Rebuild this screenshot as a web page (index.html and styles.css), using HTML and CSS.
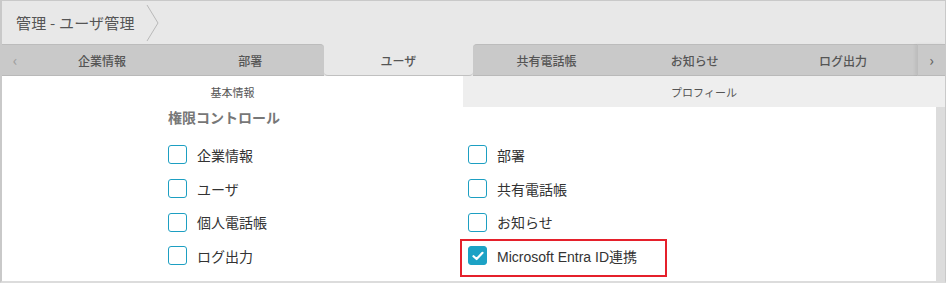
FILE: index.html
```html
<!DOCTYPE html>
<html lang="ja">
<head>
<meta charset="utf-8">
<link rel="stylesheet" href="styles.css">
</head>
<body>
<div class="frame">
  <header class="head">
    <span class="crumb">管理 - ユーザ管理</span>
    <svg class="chev" width="14" height="38" viewBox="0 0 14 38"><path d="M1 1 L12 19 L1 37" fill="none" stroke="#b9b9b9" stroke-width="1"/></svg>
  </header>
  <nav class="tabs">
    <div class="arrow left">‹</div>
    <div class="tab">企業情報</div>
    <div class="tab pre">部署</div>
    <div class="tab active">ユーザ</div>
    <div class="tab post">共有電話帳</div>
    <div class="tab">お知らせ</div>
    <div class="tab">ログ出力</div>
    <div class="arrow right">›</div>
  </nav>
  <div class="subtabs">
    <div class="subtab on">基本情報</div>
    <div class="subtab">プロフィール</div>
  </div>
  <main class="body">
    <section class="content">
      <h2 class="title">権限コントロール</h2>
      <div class="grid">
        <label class="item"><span class="box"></span>企業情報</label>
        <label class="item"><span class="box"></span>部署</label>
        <label class="item"><span class="box"></span>ユーザ</label>
        <label class="item"><span class="box"></span>共有電話帳</label>
        <label class="item"><span class="box"></span>個人電話帳</label>
        <label class="item"><span class="box"></span>お知らせ</label>
        <label class="item"><span class="box"></span>ログ出力</label>
        <label class="item mark"><span class="box checked"><svg width="12" height="10" viewBox="0 0 12 10"><path d="M1.5 5.2 L4.6 8 L10.5 1.8" fill="none" stroke="#fff" stroke-width="2.2" stroke-linecap="round" stroke-linejoin="round"/></svg></span>Microsoft Entra ID連携</label>
      </div>
    </section>
    <div class="scroll"></div>
  </main>
</div>
</body>
</html>
```

FILE: styles.css
```css
* { box-sizing: border-box; }
html, body { margin: 0; padding: 0; background: #fff; }
body {
  font-family: "Noto Sans CJK JP", "Liberation Sans", sans-serif;
  color: #333;
}
.frame {
  width: 946px;
  height: 283px;
  border: 1px solid #c9c9c9;
  border-left: 2px solid #c9c9c9;
  border-bottom: 2px solid #dcdcdc;
  display: flex;
  flex-direction: column;
  overflow: hidden;
}
.head {
  height: 43px;
  background: #e8e8e8;
  display: flex;
  align-items: center;
  padding-left: 14px;
  flex: none;
}
.crumb {
  font-size: 15px;
  color: #555;
  letter-spacing: 0.2px;
}
.chev { margin-left: 11px; margin-top: 1px; }
.tabs {
  height: 32px;
  background: #e8e8e8;
  display: grid;
  grid-template-columns: 26px repeat(6, 1fr) 28px;
  flex: none;
}
.tab, .arrow {
  background: #c9c9c9;
  border-top: 1px solid #bcbcbc;
  border-bottom: 1px solid #b9b9b9;
  display: flex;
  align-items: center;
  justify-content: center;
  font-size: 12px;
  font-weight: 500;
  color: #555;
}
.tab.pre { border-top-right-radius: 4px; }
.tab.post { border-top-left-radius: 4px; }
.tab.active {
  background: #e8e8e8;
  border-top-color: #e8e8e8;
  border-radius: 0 0 4px 4px;
  border-bottom: 1px solid #c0c0c0;
}
.arrow {
  font-size: 15px;
  color: #888;
  padding-bottom: 2px;
}
.arrow.left { color: #a0a0a0; }
.arrow.right {
  border-left: 1px solid #bdbdbd;
  box-shadow: -2px 0 3px rgba(0,0,0,0.06);
  color: #666;
}
.subtabs {
  height: 31px;
  display: grid;
  grid-template-columns: 461px 1fr;
  flex: none;
}
.subtab {
  display: flex;
  align-items: center;
  justify-content: center;
  font-size: 11px;
  color: #555;
  background: #eeeeee;
}
.subtab.on { background: #fff; }
.body {
  flex: 1;
  display: flex;
  min-height: 0;
}
.content {
  flex: 1;
  padding-left: 166px;
}
.scroll {
  width: 9px;
  background: #dcdcdc;
  flex: none;
}
.title {
  margin: 0;
  font-size: 14px;
  font-weight: 700;
  color: #777;
  line-height: 20px;
  padding-top: 0;
}
.grid {
  margin-top: 11px;
  display: grid;
  grid-template-columns: 300px 300px;
  grid-auto-rows: 33.7px;
}
.item {
  display: flex;
  align-items: center;
  font-size: 14px;
  color: #333;
  position: relative;
}
.box {
  width: 19px;
  height: 19px;
  border: 1.5px solid #1d9fc2;
  border-radius: 3px;
  margin-right: 10px;
  display: flex;
  align-items: center;
  justify-content: center;
  background: #fff;
}
.box.checked {
  background: #1ca2c5;
  border-color: #1ca2c5;
}
.mark {
  font-family: "Liberation Sans", "Noto Sans CJK JP", sans-serif;
}
.mark::after {
  content: "";
  position: absolute;
  left: -8px;
  top: 0;
  width: 203px;
  height: 34px;
  border: 2px solid #e5202b;
}
```
